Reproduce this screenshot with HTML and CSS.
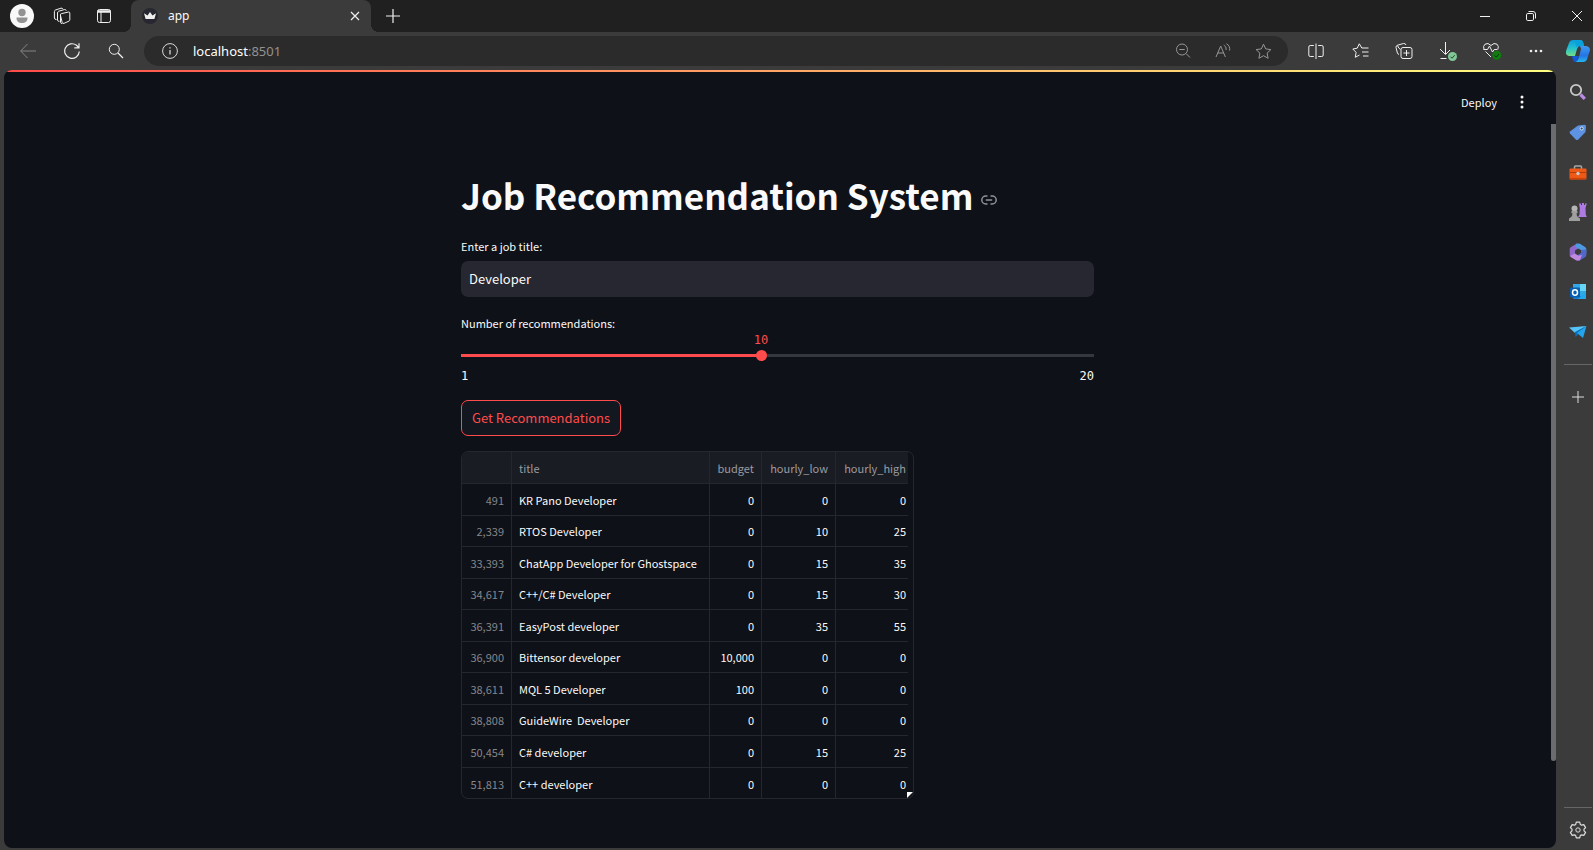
FILE: index.html
```html
<!DOCTYPE html>
<html lang="en">
<head>
<meta charset="utf-8">
<title>app</title>
<link rel="stylesheet" href="styles.css">
</head>
<body>
<div class="browser">
  <header class="titlebar">
    <button class="icon avatar" aria-label="Profile"><svg width="24" height="24" viewBox="0 0 24 24"><circle cx="12" cy="12" r="12" fill="#f8f8f8"/><circle cx="12" cy="8.500" r="3.700" fill="#929292"/><path d="M6.500 13.500h11c0 4-2 5.500-5.500 5.500s-5.500-1.500-5.500-5.500z" fill="#929292"/></svg></button>
    <button class="icon" aria-label="Workspaces"><svg width="18" height="18" viewBox="0 0 18 18" class="line"><path d="M8.200 6.700l7.300-1.700q1.300-.2 1.300 1.100v6.700q0 .9-.8 1.300l-4.900 2.200q-1.500.6-1.900-.9L7.400 8.200q-.2-1.200.8-1.500zM7.500 7.600v7.600q.2 1.600 1.800 1.300"/><path d="M6.500 14.300q-1.800.4-2-1.200V6q0-1.200 1-1.700l6-1.800q1.300-.3 1.700 1.200"/><path d="M3.500 12.500Q1.600 12.600 1.400 11V4.600q0-1.200 1-1.600L8 1.200q1.300-.4 1.900.8"/></svg></button>
    <button class="icon" aria-label="Tab actions"><svg width="16" height="16" viewBox="0 0 16 16" class="line"><rect x="1.500" y="1.500" width="13" height="13" rx="2"/><path d="M1.500 3.500h13" stroke-width="2.500"/><path d="M5 4v10.500"/></svg></button>
    <div class="tab">
      <svg width="16" height="16" viewBox="0 0 16 16"><circle cx="8" cy="8" r="8" fill="#262730"/><path d="M2 5.300l3.500 2.200L8 4l2.500 3.500L14 5.300l-1.600 5.800H3.600z" fill="#eee"/></svg>
      <span class="tab-name">app</span>
      <button class="icon tab-close" aria-label="Close tab"><svg width="10" height="10" viewBox="0 0 10 10" class="line"><path d="M1 1l8 8M9 1l-8 8" stroke-width="1.200"/></svg></button>
    </div>
    <button class="icon new-tab" aria-label="New tab"><svg width="14" height="14" viewBox="0 0 14 14" class="line"><path d="M7 0v14M0 7h14" stroke-width="1.200"/></svg></button>
    <div class="window-controls">
      <button class="icon" aria-label="Minimize"><svg width="10" height="10" viewBox="0 0 10 10" class="line"><path d="M0 5.500h10"/></svg></button>
      <button class="icon" aria-label="Restore"><svg width="10" height="10" viewBox="0 0 10 10" class="line"><rect x=".5" y="2.500" width="7" height="7" rx="1.300"/><path d="M2.500 .5H7q2.500 0 2.500 2.500v4.500"/></svg></button>
      <button class="icon" aria-label="Close"><svg width="10" height="10" viewBox="0 0 10 10" class="line"><path d="M0 0l10 10M10 0L0 10"/></svg></button>
    </div>
  </header>

  <div class="toolbar">
    <nav class="nav-buttons">
      <button class="icon dim" aria-label="Back"><svg width="16" height="16" viewBox="0 0 16 16" class="line"><path d="M16 8H.7M7.500 1L.7 8l6.800 7"/></svg></button>
      <button class="icon" aria-label="Refresh"><svg width="16" height="16" viewBox="0 0 16 16" class="line"><path d="M15.300 8.500A7.300 7.300 0 1 1 12.500 2.300L14.600 4.500M15 .3v4.500h-4.700" stroke-width="1.200"/></svg></button>
      <button class="icon" aria-label="Search"><svg width="16" height="16" viewBox="0 0 16 16" class="line"><circle cx="6.300" cy="6.300" r="5"/><path d="M10 10l5 5" stroke-width="1.200"/></svg></button>
    </nav>
    <div class="address">
      <svg class="line info" width="16" height="16" viewBox="0 0 16 16"><circle cx="8" cy="8" r="7.400"/><path d="M8 7v4.500M8 4.200v1.300" stroke-width="1.300"/></svg>
      <a class="url" href="#">localhost<span class="port">:8501</span></a>
      <div class="address-actions">
        <button class="icon faint" aria-label="Zoom out"><svg width="16" height="16" viewBox="0 0 16 16" class="line"><circle cx="7" cy="6.500" r="5.500"/><path d="M11 10.500l4 4M4.300 6.500h5.400"/></svg></button>
        <button class="icon faint" aria-label="Read aloud"><svg width="16" height="16" viewBox="0 0 16 16" class="line"><path d="M1 14L5.700 3l4.700 11M2.700 10h6M8.700 2q3 1.500 2.500 5M11.400.7q4 2.200 3.200 6.800"/></svg></button>
        <button class="icon faint" aria-label="Favorite"><svg width="17" height="17" viewBox="0 0 17 17" class="line"><path d="M8.500 1.200l2.200 4.700 5.200.7-3.800 3.500 1 5.200-4.600-2.600-4.600 2.600 1-5.200L1.100 6.600l5.200-.7z"/></svg></button>
      </div>
    </div>
    <div class="tools">
      <button class="icon" aria-label="Split screen"><svg width="16" height="16" viewBox="0 0 16 16" class="line"><path d="M5.800 2.500H2.200Q.8 2.500.8 4v8q0 1.500 1.400 1.500h3.600M10.200 2.500h3.600q1.400 0 1.400 1.500v8q0 1.500-1.400 1.500h-3.600M8 .5v15.500"/></svg></button>
      <button class="icon" aria-label="Favorites"><svg width="17" height="16" viewBox="0 0 17 16" class="line"><path d="M16.500 5H9.800L7.300.8 5.200 5.200.8 6l3.300 3.300-.8 5 4.200-2.300M10 9h6.500M11 13h5.500"/></svg></button>
      <button class="icon" aria-label="Collections"><svg width="18" height="18" viewBox="0 0 18 18" class="line"><rect x="6" y="5.500" width="11" height="11" rx="2"/><path d="M11.500 8v6M8.500 11h6M4 12.500q-1.300-.5-1.600-1.500L1 5.500Q.8 3.800 2.500 3.200L8.500 1.500q2-.3 2.500 1.500M2.500 3.500q1 3 3 4"/></svg></button>
      <button class="icon" aria-label="Downloads"><svg width="20" height="20" viewBox="0 0 20 20" class="line"><path d="M7.500 1v12M2 8l5.500 5.500L12 9M2.500 17.500h6"/><circle cx="14.500" cy="15.500" r="4.500" fill="#80c896" stroke="none"/><path d="M12.500 15.700l1.500 1.500 2.700-3" stroke="#244b30"/></svg></button>
      <button class="icon" aria-label="Performance"><svg width="20" height="20" viewBox="0 0 20 20" class="line"><path d="M3.500 10.500L9 16M2 8.500Q.7 5 3 3.200 6 1.200 9 4.500q3-3.300 6-1.300 2.300 2 .8 5.300M1.500 8.500h4l2-3.500 3 6 1.700-2.500h3"/><circle cx="14.800" cy="14.300" r="4.500" fill="#107c10" stroke="none"/><path d="M12.700 14.500l1.500 1.500 2.800-3" stroke="#092f0a"/></svg></button>
      <button class="icon" aria-label="More"><svg width="14" height="4" viewBox="0 0 14 4" fill="#eee"><circle cx="2" cy="2" r="1.300"/><circle cx="7" cy="2" r="1.300"/><circle cx="12" cy="2" r="1.300"/></svg></button>
    </div>
    <button class="icon copilot" aria-label="Copilot"><svg width="24" height="24" viewBox="0 0 24 24"><defs><linearGradient id="cpa" x1="0" y1="0" x2="0" y2="1"><stop offset="0" stop-color="#0b9bdc"/><stop offset=".5" stop-color="#22c1d0"/><stop offset="1" stop-color="#73dc86"/></linearGradient><linearGradient id="cpb" x1="0" y1="0" x2="0" y2="1"><stop offset="0" stop-color="#3f9af2"/><stop offset=".6" stop-color="#2574e4"/><stop offset="1" stop-color="#22b8f0"/></linearGradient></defs><path d="M14 7h6q4 .5 4 4l-2.500 8q-1 4-4.500 4H9q3-1 4-5l2-8z" fill="url(#cpb)"/><path d="M6 17h7q-1 5-4 6-2 0-3-6z" fill="#1556d4"/><path d="M7 1h8q2 0 3 6h-4q-2 0-3 3l-2 7H3q-4-1-3-5L3 4q1-3 4-3z" fill="url(#cpa)"/><path d="M9 1h6q2 0 3 6h-4q-2 0-4 1z" fill="#08a1dc"/></svg></button>
  </div>

  <div class="workspace">
    <div class="page">
      <div class="app-header">
        <button class="deploy">Deploy</button>
        <button class="icon kebab" aria-label="Menu"><svg width="4" height="14" viewBox="0 0 4 14" fill="#fafafa"><circle cx="2" cy="2" r="1.500"/><circle cx="2" cy="7" r="1.500"/><circle cx="2" cy="12" r="1.500"/></svg></button>
      </div>
      <div class="scroll-area">
        <main class="content">
          <h1 class="title">Job Recommendation System <a class="anchor" href="#" aria-label="Link to heading"><svg width="16" height="10" viewBox="0 0 16 10"><path d="M6.500 1H4.800a4 4 0 0 0 0 8h1.700M9.500 1h1.700a4 4 0 0 1 0 8H9.500M4.800 5h6.400" fill="none" stroke="#929397" stroke-width="1.500"/></svg></a></h1>
          <label class="label" for="job">Enter a job title:</label>
          <input class="text-input" id="job" type="text" value="Developer">
          <label class="label slider-label" for="count">Number of recommendations:</label>
          <div class="slider">
            <output class="slider-value" for="count" style="left:47.4%">10</output>
            <input class="range" id="count" type="range" min="1" max="20" value="10">
            <div class="ticks"><span>1</span><span>20</span></div>
          </div>
          <button class="primary">Get Recommendations</button>
          <div class="frame">
            <table class="data">
              <colgroup><col class="c-index"><col class="c-title"><col class="c-budget"><col class="c-low"><col class="c-high"></colgroup>
              <thead><tr><th></th><th class="text">title</th><th>budget</th><th>hourly_low</th><th>hourly_high</th></tr></thead>
              <tbody>
                <tr><th>491</th><td class="text">KR Pano Developer</td><td>0</td><td>0</td><td>0</td></tr>
                <tr><th>2,339</th><td class="text">RTOS Developer</td><td>0</td><td>10</td><td>25</td></tr>
                <tr><th>33,393</th><td class="text">ChatApp Developer for Ghostspace</td><td>0</td><td>15</td><td>35</td></tr>
                <tr><th>34,617</th><td class="text">C++/C# Developer</td><td>0</td><td>15</td><td>30</td></tr>
                <tr><th>36,391</th><td class="text">EasyPost developer</td><td>0</td><td>35</td><td>55</td></tr>
                <tr><th>36,900</th><td class="text">Bittensor developer</td><td>10,000</td><td>0</td><td>0</td></tr>
                <tr><th>38,611</th><td class="text">MQL 5 Developer</td><td>100</td><td>0</td><td>0</td></tr>
                <tr><th>38,808</th><td class="text">GuideWire  Developer</td><td>0</td><td>0</td><td>0</td></tr>
                <tr><th>50,454</th><td class="text">C# developer</td><td>0</td><td>15</td><td>25</td></tr>
                <tr><th>51,813</th><td class="text">C++ developer</td><td>0</td><td>0</td><td>0</td></tr>
              </tbody>
            </table>
            <svg class="grip" width="6" height="6" viewBox="0 0 6 6"><path d="M0 0h6L0 6z" fill="#fff"/></svg>
          </div>
        </main>
        <div class="scrollbar"><div class="thumb"></div></div>
      </div>
    </div>

    <aside class="sidebar">
      <button class="icon side" aria-label="Search"><svg width="18" height="18" viewBox="0 0 18 18"><circle cx="7" cy="7" r="5.200" fill="none" stroke="#c9c9c9" stroke-width="1.800"/><path d="M11.500 11.500l4.300 4.300" stroke="#b98ae6" stroke-width="3.200"/></svg></button>
      <button class="icon side" aria-label="Shopping"><svg width="18" height="18" viewBox="0 0 18 18"><path d="M9 2.500l6.500-.8q1.500 0 1.500 1.500L16.500 9 9 16.700q-1 .8-2 0L1 10.500q-.8-1 0-2z" fill="#5d93e2"/><circle cx="12.700" cy="5.500" r="1.500" fill="#28476f" stroke="#d9e9fc" stroke-width="1"/></svg></button>
      <button class="icon side" aria-label="Tools"><svg width="18" height="18" viewBox="0 0 18 18"><path d="M5.500 6V4q0-1 1-1h5q1 0 1 1v2" fill="none" stroke="#a8a8a8" stroke-width="1.500"/><rect x=".5" y="5.500" width="17" height="11" rx="1" fill="#ee5a16"/><path d="M.5 9.500h17" stroke="#b53a0a"/><path d="M1 15.700h16" stroke="#c94209" stroke-width="1.500"/><circle cx="9" cy="10.500" r="1.700" fill="#c8c8c8"/></svg></button>
      <button class="icon side" aria-label="Games"><svg width="18" height="18" viewBox="0 0 18 18"><path d="M10 .5h2V2h1V0h2v2h1V.5h1.800L16.500 5l.3 6.500 1 2.500H9l1.500-2.500.3-6.500z" fill="#ad7be2"/><circle cx="5.500" cy="5.500" r="3" fill="#b5b5b5"/><path d="M2.500 8h6v2l-1 .5q0 3 2 4l1.500 1v2.500h-11v-2.500l1.500-1q2-1 2-4l-1-.5z" fill="#9f9f9f"/></svg></button>
      <button class="icon side" aria-label="Microsoft 365"><svg width="18" height="18" viewBox="0 0 18 18"><path d="M8 .5L2 4Q.7 4.800.7 6v6q0 1 1 1.700L6 12V7.500l4-2.500z" fill="#8f69c9"/><path d="M7 .8q2-.8 4 0l5 3.200q1.300.8 1.300 2v5L12 9V7L6.500 4z" fill="#4c9ae1"/><path d="M17.300 6.500V12q0 1.500-1 2L11 17.200q-2 .8-4 0l-1-3.700 6-3.500V7z" fill="#5366c9"/><path d="M1 13l5-2.500 3.500 2.300 3.500-1-2 5.400q-2 .8-4 0L2 14.200z" fill="#c188df"/></svg></button>
      <button class="icon side" aria-label="Outlook"><svg width="18" height="18" viewBox="0 0 18 18"><rect x="4" y="1" width="13" height="14" fill="#32a9e7"/><path d="M11 1h6v7h-6z" fill="#65d4f6"/><path d="M4 9l13 7H5q-1 0-1-1z" fill="#127cd2"/><path d="M17 8.500V16H9z" fill="#24a8ed"/><rect x="1" y="4.500" width="10" height="10" rx="1" fill="#075db0"/><ellipse cx="6" cy="9.500" rx="2.500" ry="2.700" fill="none" stroke="#fff" stroke-width="1.500"/></svg></button>
      <button class="icon side" aria-label="Drop"><svg width="18" height="18" viewBox="0 0 18 18"><path d="M0 4.500L17.500 3 6 10z" fill="#55c5f7"/><path d="M6 9L17.500 3 6.500 14z" fill="#0870bb"/><path d="M8 10L17.500 3 14 15z" fill="#24a4ed"/></svg></button>
      <hr class="rule">
      <button class="icon side add" aria-label="Customize"><svg width="12" height="12" viewBox="0 0 12 12" class="line"><path d="M6 0v12M0 6h12"/></svg></button>
      <hr class="rule bottom">
      <button class="icon side settings" aria-label="Settings"><svg width="18" height="18" viewBox="0 0 18 18" class="line"><circle cx="9" cy="9" r="2.200"/><path d="M7.300 1.200h3.400l.6 2.200 1.300.8 2.200-.6 1.800 3-1.600 1.600v1.600l1.600 1.600-1.800 3-2.200-.6-1.300.8-.6 2.200H7.300l-.6-2.200-1.300-.8-2.200.6-1.800-3L3 9.800V8.200L1.400 6.600l1.800-3 2.200.6 1.300-.8z" stroke-width="1.200" stroke-linejoin="round"/></svg></button>
    </aside>
  </div>
</div>
</body>
</html>
```

FILE: styles.css
```css
* { box-sizing: border-box; }
body { margin: 0; background: #3b3b3b; color: #fafafa; font-family: "Noto Sans CJK SC", "Open Sans", sans-serif; }
button, input { font: inherit; color: inherit; }
.browser { display: flex; flex-direction: column; height: 100vh; min-height: 850px; }

.icon { display: flex; align-items: center; justify-content: center; flex: none; width: 24px; height: 24px; padding: 0; border: 0; background: none; color: #f0f0f0; }
.icon svg { flex: none; }
.line { fill: none; stroke: currentColor; }
.dim { color: #858585; }
.faint { color: #969696; }

.titlebar { display: flex; align-items: center; height: 32px; padding: 0 8px 0 10px; background: #202020; gap: 16px; font-family: "Noto Sans", sans-serif; }
.titlebar > .icon + .icon { margin-right: 2px; }
.tab { position: relative; display: flex; align-items: center; width: 240px; height: 32px; margin-left: -3px; padding: 0 10px 0 11px; background: #3b3b3b; border-radius: 8px 8px 0 0; }
.tab::before, .tab::after { content: ""; position: absolute; bottom: 0; width: 8px; height: 8px; }
.tab::before { left: -8px; background: radial-gradient(circle at 0 0, #202020 8px, #3b3b3b 8px); }
.tab::after { right: -8px; background: radial-gradient(circle at 100% 0, #202020 8px, #3b3b3b 8px); }
.tab-name { flex: 1; margin-left: 10px; font-size: 12px; line-height: 16px; }
.tab-close { width: 12px; }
.new-tab { margin-left: -6px; }
.window-controls { display: flex; gap: 30px; margin-left: auto; }
.window-controls .icon { width: 16px; }

.toolbar { display: flex; align-items: center; height: 38px; padding: 0 3px 0 16px; }
.nav-buttons { display: flex; gap: 20px; }
.address { display: flex; align-items: center; flex: 1; height: 30px; margin: 0 16px; padding: 0 13px 0 18px; border-radius: 15px; background: #2b2b2b; font-family: "Noto Sans", sans-serif; }
.info { color: #d8d8d8; }
.url { flex: 1; margin-left: 15px; color: #fff; font-size: 13px; line-height: 20px; text-decoration: none; }
.port { color: #929292; }
.address-actions { display: flex; gap: 16px; }
.tools { display: flex; gap: 20px; margin-right: 18px; }

.workspace { display: flex; flex: 1; padding-left: 4px; }
.page { display: flex; flex-direction: column; flex: 1; min-width: 0; margin-bottom: 2px; background: #0e1117; border-radius: 8px; overflow: hidden; }
.page::before { content: ""; height: 2px; background: linear-gradient(90deg, #ff4b4b, #ffff80); }
.app-header { display: flex; align-items: center; justify-content: flex-end; height: 52px; padding: 8px 22px 0 0; gap: 13px; }
.deploy { padding: 0; border: 0; background: none; font-size: 11px; line-height: 20px; }
.scroll-area { display: flex; flex: 1; }
.scrollbar { width: 5px; }
.thumb { height: 88%; background: #6b6c70; border-radius: 0 0 3px 3px; }

.content { width: 100%; max-width: 633px; margin: 0 auto; padding-top: 46px; }
.title { display: flex; align-items: center; gap: 8px; margin: 0 0 17px; font-size: 35px; line-height: 50px; font-weight: 700; white-space: nowrap; }
.anchor { display: flex; padding-top: 9px; }
.label { display: block; margin-bottom: 6px; font-size: 11px; line-height: 18px; }
.text-input { display: block; width: 100%; height: 36px; padding: 0 8px 2px; border: 0; border-radius: 7px; background: #262730; font-size: 13px; outline: 0; }
.slider-label { margin: 17px 0 0; }
.slider { position: relative; padding-top: 17px; margin-bottom: 15px; font: 12px/18px "DejaVu Sans Mono", monospace; }
.slider-value { position: absolute; top: 0; transform: translateX(-50%); color: #ff4b4b; line-height: 16px; }
.range { display: block; width: 100%; height: 12px; margin: 0; appearance: none; background: linear-gradient(90deg, #ff4b4b 47.4%, #35373e 47.4%) center / 100% 3px no-repeat; }
.range::-webkit-slider-thumb { appearance: none; width: 11px; height: 11px; border-radius: 50%; background: #ff4b4b; }
.ticks { display: flex; justify-content: space-between; padding-top: 6px; }
.primary { display: block; height: 36px; padding: 0 10px 2px; border: 1px solid #ff4b4b; border-radius: 7px; background: #131720; color: #ff4b4b; font-size: 13px; }

.frame { position: relative; width: 453px; height: 348px; margin-top: 15px; border: 1px solid #25272d; border-radius: 7px; overflow: hidden; }
.data { width: 446px; border-collapse: separate; border-spacing: 0; table-layout: fixed; font-size: 11px; line-height: 18px; }
.c-index { width: 50px; }
.c-title { width: 198px; }
.c-budget { width: 52px; }
.c-low { width: 74px; }
.c-high { width: 72px; }
.data th, .data td { height: 32px; padding: 0 7px; border: solid #25272d; border-width: 0 1px 1px 0; text-align: right; font-weight: 400; white-space: pre; }
.data th { color: #85868b; }
.data thead th { background: #1a1c23; color: #9a9ba0; }
.data .text { text-align: left; }
.data tbody tr:nth-child(even) > * { height: 31px; }
.data tr > :last-child { border-right: 0; padding-right: 2px; }
.data tbody tr:last-child > * { border-bottom: 0; }
.grip { position: absolute; right: 0; bottom: 0; }

.sidebar { display: flex; flex-direction: column; align-items: center; width: 37px; padding: 2px 0 0 7px; }
.side { height: 40px; width: 30px; }
.rule { width: 28px; height: 1px; margin: 12px 0; border: 0; background: #666; }
.add { color: #ddd; }
.bottom { margin: auto 0 2px; }
.settings { color: #ddd; }
```
